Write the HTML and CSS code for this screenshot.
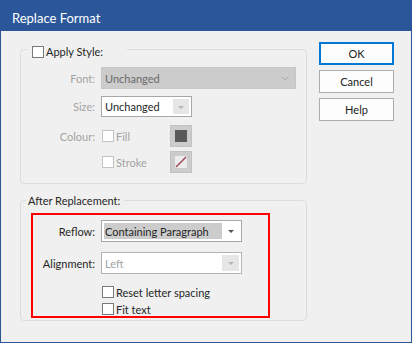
FILE: index.html
```html
<!DOCTYPE html>
<html>
<head>
<meta charset="utf-8">
<link rel="stylesheet" href="styles.css">
</head>
<body>
<div class="window">
  <div class="titlebar">Replace Format</div>
  <div class="client">
    <div class="main">
      <div class="group g1">
        <div class="legend legend-apply"><span class="cb"></span><span class="legend-text">Apply Style:</span></div>
        <div class="row r-font">
          <span class="lbl dis">Font:</span>
          <div class="combo w-font"><span class="combo-val">Unchanged</span>
            <svg class="chev" width="8" height="5" viewBox="0 0 8 5"><polyline points="0.5,0.5 4,4 7.5,0.5" fill="none" stroke="#a9a9a9" stroke-width="1"/></svg>
          </div>
        </div>
        <div class="row r-size">
          <span class="lbl dis">Size:</span>
          <div class="select w-size"><span class="sel-text">Unchanged</span><span class="sel-btn grey"><i class="tri tri-light"></i></span></div>
        </div>
        <div class="row r-fill">
          <span class="lbl dis">Colour:</span>
          <span class="check-cell dis"><span class="cb cb-dis"></span>Fill</span>
          <span class="swatch"><span class="swatch-fill"></span></span>
        </div>
        <div class="row r-stroke">
          <span class="lbl"></span>
          <span class="check-cell dis"><span class="cb cb-dis"></span>Stroke</span>
          <span class="swatch"><svg class="swatch-stroke" width="12" height="12" viewBox="0 0 12 12"><rect width="12" height="12" fill="#ececec"/><line x1="1" y1="11" x2="11" y2="1" stroke="#a4505a" stroke-width="1.6"/></svg></span>
        </div>
      </div>
      <div class="group g2">
        <div class="legend legend-after">After Replacement:</div>
        <div class="highlight">
          <div class="row r-reflow">
            <span class="lbl lbl-hl">Reflow:</span>
            <div class="select w-reflow"><span class="sel-text selected">Containing Paragraph</span><span class="sel-btn"><i class="tri tri-dark"></i></span></div>
          </div>
          <div class="row r-align">
            <span class="lbl lbl-hl">Alignment:</span>
            <div class="select w-reflow sel-dis"><span class="sel-text dis">Left</span><span class="sel-btn grey"><i class="tri tri-light"></i></span></div>
          </div>
          <div class="row r-check r-reset"><span class="check-cell"><span class="cb"></span>Reset letter spacing</span></div>
          <div class="row r-check r-fit"><span class="check-cell"><span class="cb"></span>Fit text</span></div>
        </div>
      </div>
    </div>
    <div class="buttons">
      <div class="btn btn-default">OK</div>
      <div class="btn">Cancel</div>
      <div class="btn">Help</div>
    </div>
  </div>
</div>
</body>
</html>
```
FILE: styles.css
```css
* { box-sizing: border-box; }
html, body { margin: 0; padding: 0; }
body {
  font-family: Lato, "Liberation Sans", sans-serif;
  font-size: 11px;
  color: #262626;
  background: #f0f0f0;
}
.window {
  width: 412px;
  height: 343px;
  background: #2b579a;
  padding: 0 1px 1px 1px;
  display: flex;
  flex-direction: column;
}
.titlebar {
  height: 31px;
  color: #ffffff;
  padding: 10px 0 0 11px;
  line-height: 16px;
  font-size: 13px;
  flex: none;
}
.client {
  flex: 1;
  background: #f0f0f0;
  display: flex;
  align-items: flex-start;
}
.main {
  margin-left: 19px;
  margin-top: 18px;
  width: 287px;
  display: flex;
  flex-direction: column;
}
.group {
  border: 1px solid #dcdcdc;
  border-radius: 4px;
  display: flex;
  flex-direction: column;
}
.g1 { padding-bottom: 10px; }
.g2 { margin-top: 16px; padding-bottom: 2px; }
.legend {
  height: 16px;
  line-height: 16px;
  background: #f0f0f0;
  display: flex;
  align-items: center;
  align-self: flex-start;
}
.legend-apply {
  margin: -6px 0 0 6px;
  padding-left: 5px;
  width: 100px;
}
.legend-apply .legend-text { margin-left: 2px; }
.legend-after {
  margin: -8px 0 0 5px;
  padding: 0 4px 0 2px;
}
.row {
  display: flex;
  align-items: center;
  height: 22px;
}
.r-font { margin-top: 7px; }
.r-size { margin-top: 7px; height: 21px; }
.r-fill { margin-top: 8px; }
.r-stroke { margin-top: 4px; }
.lbl {
  width: 74px;
  margin-right: 6px;
  text-align: right;
  flex: none;
}
.lbl-hl { width: 62px; }
.dis { color: #a3a3a3; }
.cb {
  width: 12px;
  height: 12px;
  border: 1px solid #7a7a7a;
  background: #ffffff;
  flex: none;
  display: inline-block;
}
.cb-dis { border-color: #c4c4c4; }
.check-cell {
  display: flex;
  align-items: center;
  width: 69px;
  padding-left: 1px;
  gap: 2px;
  flex: none;
}
.combo {
  height: 22px;
  background: #cccccc;
  border: 1px solid #c6c6c6;
  display: flex;
  align-items: center;
  justify-content: space-between;
  padding: 0 6px 0 3px;
  color: #6a6a6a;
}
.w-font { width: 195px; }
.chev { display: block; }
.select {
  height: 100%;
  border: 1px solid #a8a8a8;
  background: #ffffff;
  padding: 2px;
  display: flex;
}
.sel-dis { border-color: #b4b4b4; }
.w-size { width: 91px; }
.w-reflow { width: 141px; }
.sel-text {
  flex: 1;
  display: flex;
  align-items: center;
  padding-left: 1px;
  white-space: nowrap;
  overflow: hidden;
}
.selected { background: #cccccc; }
.sel-btn {
  width: 17px;
  flex: none;
  display: flex;
  align-items: center;
  justify-content: center;
}
.w-size .sel-btn { width: 16px; }
.sel-btn.grey { background: #e6e6e6; }
.tri {
  width: 0;
  height: 0;
  border-left: 3px solid transparent;
  border-right: 3px solid transparent;
  border-top: 3px solid #555555;
  margin-top: 1px;
}
.tri-light { border-top-color: #b5b5b5; }
.swatch {
  width: 22px;
  height: 22px;
  background: #cccccc;
  border: 1px solid #c2c2c2;
  display: flex;
  align-items: center;
  justify-content: center;
  flex: none;
}
.swatch-fill {
  width: 12px;
  height: 12px;
  background: #595959;
}
.swatch-stroke { display: block; }
.highlight {
  margin: 4px 0 0 10px;
  width: 239px;
  border: 2px solid #ff0000;
  padding-top: 5px;
  display: flex;
  flex-direction: column;
}
.r-align { margin-top: 10px; }
.r-check { height: 16px; }
.r-check .check-cell { width: auto; padding-left: 0; margin-left: 69px; gap: 2px; }
.r-reset { margin-top: 10px; }
.r-fit { margin-top: 2px; height: 14px; }
.buttons {
  margin-left: 12px;
  margin-top: 11px;
  width: 75px;
  display: flex;
  flex-direction: column;
  gap: 5px;
}
.btn {
  height: 23px;
  border: 1px solid #adadad;
  background: #fdfdfd;
  display: flex;
  align-items: center;
  justify-content: center;
  color: #222222;
}
.btn-default { border: 2px solid #0078d7; }
```
